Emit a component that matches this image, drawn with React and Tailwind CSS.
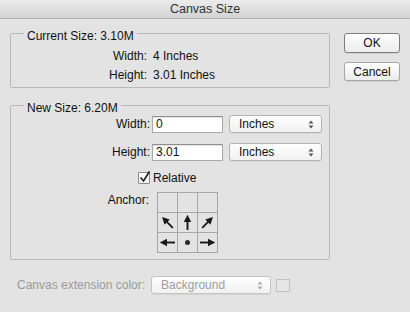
import React from "react";

const font = { fontFamily: '"Liberation Sans", Arial, sans-serif' };

function UpDown({ color = "#555" }) {
  return (
    <svg width="6" height="9" viewBox="0 0 6 9">
      <path d="M3 0.5 L5.5 3.5 L0.5 3.5 Z" fill={color} />
      <path d="M3 8.5 L5.5 5.5 L0.5 5.5 Z" fill={color} />
    </svg>
  );
}

function Select({ label, w, disabled }) {
  return (
    <div
      className={`flex items-center justify-between h-[18px] ${w} rounded-[3px] border border-[#b4b4b4] bg-gradient-to-b from-[#ffffff] to-[#f1f1f1] pl-[9px] pr-[7px] shadow-[0_1px_0_rgba(0,0,0,0.06)] ${disabled ? "text-[#9d9d9d] border-[#c4c4c4]" : "text-[#111]"}`}
    >
      <span>{label}</span>
      <UpDown color={disabled ? "#aaa" : "#555"} />
    </div>
  );
}

function Input({ value }) {
  return (
    <div className="flex items-center h-[17px] w-[71px] border border-[#a9a9a9] border-t-[#8f8f8f] bg-white pl-[3px] shadow-[inset_0_1px_1px_rgba(0,0,0,0.12)] text-[#111]">
      {value}
    </div>
  );
}

function Arrow({ angle }) {
  return (
    <svg width="19" height="19" viewBox="0 0 19 19">
      <g transform={`rotate(${angle} 9.5 9.5)`}>
        <line x1="9.5" y1="17" x2="9.5" y2="8" stroke="#1a1a1a" strokeWidth="1.9" />
        <path d="M9.5 1.8 L13.2 9 L5.8 9 Z" fill="#1a1a1a" />
      </g>
    </svg>
  );
}

function Cell({ children }) {
  return (
    <div className="w-[19px] h-[19px] box-content border-r border-b border-[#a6a6a6] flex items-center justify-center">
      {children}
    </div>
  );
}

export default function App() {
  return (
    <div
      className="w-[410px] h-[312px] bg-[#e3e3e3] text-[12px] leading-[14px] text-[#111] overflow-hidden"
      style={font}
    >
      <div className="h-[19px] border-b border-[#b3b3b3] bg-gradient-to-b from-[#ececec] to-[#d3d3d3] flex items-center justify-center text-[12.5px] text-[#333]">
        Canvas Size
      </div>

      <div className="flex">
        <div className="ml-[10px] w-[320px]">
          <fieldset className="mt-[4px] border border-[#b9b9b9] rounded-[2px] pb-[3px]">
            <legend className="ml-[13px] px-[3px] pt-[6px] leading-[14px]">
              Current Size: 3.10M
            </legend>
            <div className="pt-[3px]">
              <div className="flex items-center h-[19px]">
                <span className="w-[136px] text-right">Width:</span>
                <span className="ml-[6px]">4 Inches</span>
              </div>
              <div className="flex items-center h-[19px]">
                <span className="w-[136px] text-right">Height:</span>
                <span className="ml-[6px]">3.01 Inches</span>
              </div>
            </div>
          </fieldset>

          <fieldset className="mt-[7px] border border-[#b9b9b9] rounded-[2px] pb-[6px]">
            <legend className="ml-[13px] px-[3px] pt-[6px] leading-[14px]">
              New Size: 6.20M
            </legend>
            <div>
              <div className="flex items-center">
                <span className="w-[139px] text-right">Width:</span>
                <span className="ml-[2px]">
                  <Input value="0" />
                </span>
                <span className="ml-[6px]">
                  <Select label="Inches" w="w-[93px]" />
                </span>
              </div>
              <div className="flex items-center mt-[10px]">
                <span className="w-[139px] text-right">Height:</span>
                <span className="ml-[2px]">
                  <Input value="3.01" />
                </span>
                <span className="ml-[6px]">
                  <Select label="Inches" w="w-[93px]" />
                </span>
              </div>
              <div className="flex items-center mt-[10px] h-[13px]">
                <div className="ml-[127px] w-[12px] h-[12px] border border-[#8a8a8a] bg-gradient-to-b from-white to-[#f0f0f0] rounded-[1px] relative">
                  <svg
                    width="14"
                    height="14"
                    viewBox="0 0 14 14"
                    className="absolute left-[-1px] top-[-3px]"
                  >
                    <path d="M2.5 7.5 L5.5 11 L11.5 1.5" fill="none" stroke="#1c1c1c" strokeWidth="1.6" />
                  </svg>
                </div>
                <span className="ml-[3px]">Relative</span>
              </div>
              <div className="flex items-start mt-[8px]">
                <span className="w-[138px] text-right mt-[1px]">Anchor:</span>
                <div className="ml-[8px] grid grid-cols-3 border-l border-t border-[#a6a6a6]">
                  <Cell />
                  <Cell />
                  <Cell />
                  <Cell>
                    <Arrow angle={-45} />
                  </Cell>
                  <Cell>
                    <Arrow angle={0} />
                  </Cell>
                  <Cell>
                    <Arrow angle={45} />
                  </Cell>
                  <Cell>
                    <Arrow angle={-90} />
                  </Cell>
                  <Cell>
                    <div className="w-[5px] h-[5px] rounded-full bg-[#2a2a2a]" />
                  </Cell>
                  <Cell>
                    <Arrow angle={90} />
                  </Cell>
                </div>
              </div>
            </div>
          </fieldset>

          <div className="mt-[16px] flex items-center">
            <span className="ml-[7px] text-[#9b9b9b]">Canvas extension color:</span>
            <span className="ml-[6px]">
              <Select label="Background" w="w-[120px]" disabled />
            </span>
            <div className="ml-[5px] w-[14px] h-[13px] border border-[#c2c2c2] bg-[#e6e6e6]" />
          </div>
        </div>

        <div className="ml-[14px] mt-[14px] flex flex-col">
          <div className="w-[56px] h-[20px] flex items-center justify-center rounded-[3px] border border-[#7d7d7d] bg-gradient-to-b from-[#ffffff] to-[#ececec] shadow-[0_1px_0_rgba(0,0,0,0.08)] text-[#111]">
            OK
          </div>
          <div className="mt-[9px] w-[56px] h-[19px] flex items-center justify-center rounded-[3px] border border-[#a5a5a5] bg-gradient-to-b from-[#ffffff] to-[#ececec] shadow-[0_1px_0_rgba(0,0,0,0.08)] text-[#111]">
            Cancel
          </div>
        </div>
      </div>
    </div>
  );
}
